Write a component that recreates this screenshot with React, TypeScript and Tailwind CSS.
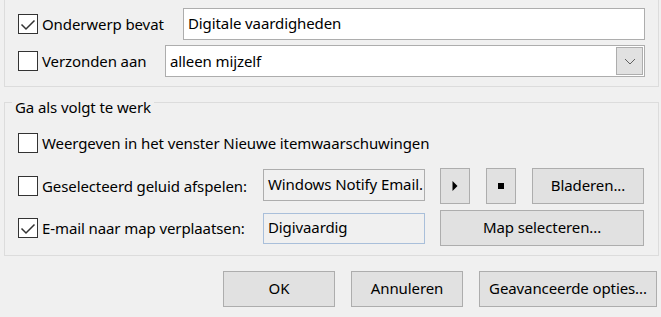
import type { ReactNode } from "react";

const Check = ({ checked = false }: { checked?: boolean }) => (
  <span className="relative w-[20px] h-[20px] shrink-0 border border-[#333333] bg-white">
    {checked && (
      <svg
        className="absolute left-0 top-0"
        width="18"
        height="18"
        viewBox="0 0 18 18"
      >
        <path d="M2.5 9.5 L7 14 L15.5 5.5" fill="none" stroke="#333333" strokeWidth="1.5" />
      </svg>
    )}
  </span>
);

const Btn = ({ className = "", children }: { className?: string; children?: ReactNode }) => (
  <div
    className={
      "h-[36px] shrink-0 bg-[#e1e1e1] border border-[#adadad] flex items-center justify-center text-black " +
      className
    }
  >
    {children}
  </div>
);

const App = () => {
  return (
    <div className="w-[661px] h-[317px] bg-[#f0f0f0] overflow-hidden text-[15px] tracking-[-0.1px] text-black font-['Noto_Sans',sans-serif] leading-none">
      {/* top group (top edge scrolled off) */}
      <div className="ml-[4px] w-[655px] h-[87px] border-x border-b border-[#dcdcdc] pt-[8px] px-[13px] flex flex-col gap-[5px]">
        <div className="h-[32px] flex items-center">
          <Check checked />
          <span className="ml-[4px] w-[141px]">Onderwerp bevat</span>
          <div className="flex-1 h-[32px] bg-white border border-[#adadad] flex items-center pl-[4px] pb-[2px]">
            Digitale vaardigheden
          </div>
        </div>
        <div className="h-[32px] flex items-center">
          <Check />
          <span className="ml-[4px] w-[123px]">Verzonden aan</span>
          <div className="flex-1 h-[32px] bg-white border border-[#adadad] flex items-center pl-[4px]">
            <span className="flex-1">alleen mijzelf</span>
            <div className="w-[27px] h-[28px] mr-[1px] bg-[#e1e1e1] border border-[#adadad] flex items-center justify-center">
              <svg width="12" height="7" viewBox="0 0 12 7">
                <path d="M1 1 L6 6 L11 1" fill="none" stroke="#606060" strokeWidth="1" />
              </svg>
            </div>
          </div>
        </div>
      </div>

      {/* Ga als volgt te werk */}
      <div className="relative mt-[15px] ml-[4px] w-[655px] h-[154px] border border-[#dcdcdc] pt-[30px] pl-[13px] pr-[14px]">
        <span className="absolute left-[7px] top-[-4px] bg-[#f0f0f0] px-[3px] leading-[16px]">
          Ga als volgt te werk
        </span>
        <div className="h-[20px] flex items-center">
          <Check />
          <span className="ml-[4px]">Weergeven in het venster Nieuwe itemwaarschuwingen</span>
        </div>
        <div className="mt-[15px] h-[36px] flex items-center">
          <Check />
          <span className="ml-[4px] w-[221px]">Geselecteerd geluid afspelen:</span>
          <div className="w-[162px] h-[32px] mb-[2px] border border-[#adadad] flex items-center pl-[4px] pb-[2px] whitespace-nowrap overflow-hidden">
            Windows Notify Email.
          </div>
          <Btn className="ml-[15px] w-[30px]">
            <svg width="6" height="10" viewBox="0 0 6 10">
              <path d="M0.5 0 L5.5 5 L0.5 10 Z" fill="#000" />
            </svg>
          </Btn>
          <Btn className="ml-[16px] w-[30px]">
            <span className="w-[6px] h-[6px] bg-black" />
          </Btn>
          <Btn className="ml-[16px] w-[112px] pb-[2px]">Bladeren...</Btn>
        </div>
        <div className="mt-[6px] h-[36px] flex items-center">
          <Check checked />
          <span className="ml-[4px] w-[221px]">E-mail naar map verplaatsen:</span>
          <div className="w-[162px] h-[31px] border border-[#a9bfda] flex items-center pl-[4px] pb-[2px]">
            Digivaardig
          </div>
          <Btn className="ml-[15px] w-[204px] pb-[2px]">Map selecteren...</Btn>
        </div>
      </div>

      {/* dialog buttons */}
      <div className="mt-[15px] pr-[4px] flex justify-end gap-[16px]">
        <Btn className="w-[112px] pb-[2px]">OK</Btn>
        <Btn className="w-[112px] pb-[2px]">Annuleren</Btn>
        <Btn className="w-[178px] pb-[2px]">Geavanceerde opties...</Btn>
      </div>
    </div>
  );
};

export default App;
